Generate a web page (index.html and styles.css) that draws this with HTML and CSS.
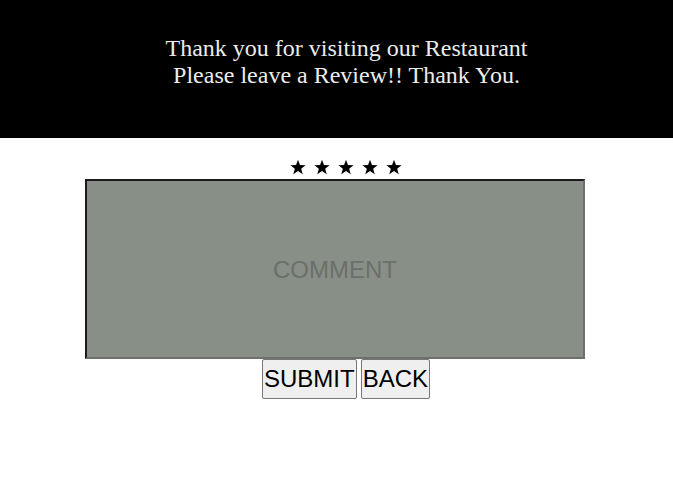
FILE: index.html
```html
<!DOCTYPE html>
<html>
<head>
<meta charset="utf-8">
<link rel="stylesheet" href="styles.css">
</head>
<body>
<header class="hero">
  <p class="hero-text">Thank you for visiting our Restaurant<br>Please leave a Review!! Thank You.</p>
</header>
<main class="review">
  <div class="stars">
    <svg class="star" viewBox="0 0 24 24"><polygon points="12,1 14.9,9 23.4,9.3 16.7,14.6 19.1,22.8 12,18 4.9,22.8 7.3,14.6 0.6,9.3 9.1,9"/></svg>
    <svg class="star" viewBox="0 0 24 24"><polygon points="12,1 14.9,9 23.4,9.3 16.7,14.6 19.1,22.8 12,18 4.9,22.8 7.3,14.6 0.6,9.3 9.1,9"/></svg>
    <svg class="star" viewBox="0 0 24 24"><polygon points="12,1 14.9,9 23.4,9.3 16.7,14.6 19.1,22.8 12,18 4.9,22.8 7.3,14.6 0.6,9.3 9.1,9"/></svg>
    <svg class="star" viewBox="0 0 24 24"><polygon points="12,1 14.9,9 23.4,9.3 16.7,14.6 19.1,22.8 12,18 4.9,22.8 7.3,14.6 0.6,9.3 9.1,9"/></svg>
    <svg class="star" viewBox="0 0 24 24"><polygon points="12,1 14.9,9 23.4,9.3 16.7,14.6 19.1,22.8 12,18 4.9,22.8 7.3,14.6 0.6,9.3 9.1,9"/></svg>
  </div>
  <textarea class="comment" placeholder="COMMENT"></textarea>
  <div class="actions">
    <button class="btn">SUBMIT</button>
    <button class="btn">BACK</button>
  </div>
</main>
</body>
</html>
```

FILE: styles.css
```css
html, body {
  margin: 0;
  padding: 0;
  background: #fff;
}
.hero {
  background: #000;
  height: 138px;
  display: flex;
  align-items: center;
  justify-content: center;
  padding-left: 20px;
}
.hero-text {
  margin: 0;
  color: #ececec;
  font-family: "Liberation Serif", serif;
  font-size: 24px;
  line-height: 27px;
  text-align: center;
  padding-bottom: 15px;
}
.review {
  display: flex;
  flex-direction: column;
  align-items: center;
  padding-top: 21px;
}
.stars {
  display: flex;
  gap: 8px;
  height: 20px;
  align-items: flex-start;
  margin-left: 19px;
}
.star {
  width: 16px;
  height: 16px;
  fill: #000;
  display: block;
}
.comment {
  box-sizing: border-box;
  width: 500px;
  height: 180px;
  margin: 0 0 0 -3px;
  border: 2px solid #6f6f6f;
  border-top-color: #1a1a1a;
  border-left-color: #1a1a1a;
  background: #878f86;
  font-family: "Liberation Sans", sans-serif;
  font-size: 24px;
  text-align: center;
  padding: 75px 4px 0;
  resize: none;
  display: block;
}
.comment::placeholder {
  color: #6c6f6b;
}
.actions {
  display: flex;
  gap: 4px;
  margin-left: 19px;
}
.btn {
  font-family: "Liberation Sans", sans-serif;
  font-size: 24px;
  height: 40px;
  padding: 1px 1px;
  background: #efefef;
  border: 1px solid #767676;
  border-radius: 2px;
  color: #000;
}
```
